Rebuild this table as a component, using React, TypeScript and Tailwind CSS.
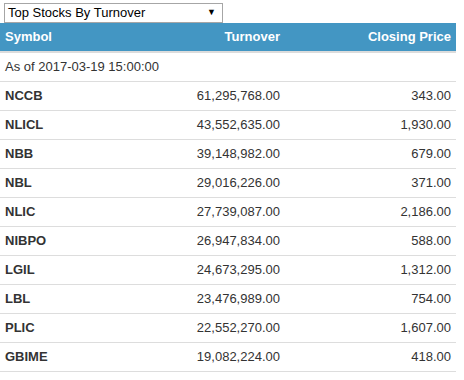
const rows: { symbol: string; turnover: string; close: string }[] = [
  { symbol: 'NCCB', turnover: '61,295,768.00', close: '343.00' },
  { symbol: 'NLICL', turnover: '43,552,635.00', close: '1,930.00' },
  { symbol: 'NBB', turnover: '39,148,982.00', close: '679.00' },
  { symbol: 'NBL', turnover: '29,016,226.00', close: '371.00' },
  { symbol: 'NLIC', turnover: '27,739,087.00', close: '2,186.00' },
  { symbol: 'NIBPO', turnover: '26,947,834.00', close: '588.00' },
  { symbol: 'LGIL', turnover: '24,673,295.00', close: '1,312.00' },
  { symbol: 'LBL', turnover: '23,476,989.00', close: '754.00' },
  { symbol: 'PLIC', turnover: '22,552,270.00', close: '1,607.00' },
  { symbol: 'GBIME', turnover: '19,082,224.00', close: '418.00' }
];

export default function App() {
  return (
    <div className="min-h-screen bg-white pt-[3px] font-['Liberation_Sans',Arial,sans-serif] text-[13px] text-[#333]">
      <div className="ml-[4px] flex h-[20px] w-[219px] items-center justify-between border border-[#a6a6a6] bg-white pl-[3px] pr-[6px] text-[13px] text-black">
        <span>Top Stocks By Turnover</span>
        <span className="text-[9px]">▼</span>
      </div>
      <div className="w-[456px]">
        <div className="flex h-[30px] items-center border-b-2 border-[#dcdcdc] bg-[#4396c3] font-bold text-white">
          <div className="w-[150px] pl-[5px]">Symbol</div>
          <div className="w-[130px] text-right">Turnover</div>
          <div className="flex-1 pr-[5px] text-right">Closing Price</div>
        </div>
        <div className="flex h-[29px] items-center border-b border-[#ddd] pl-[5px]">As of 2017-03-19 15:00:00</div>
        {rows.map((row) => (
          <div key={row.symbol} className="flex h-[29px] items-center border-b border-[#ddd]">
            <div className="w-[150px] pl-[5px] font-bold">{row.symbol}</div>
            <div className="w-[130px] text-right">{row.turnover}</div>
            <div className="flex-1 pr-[5px] text-right">{row.close}</div>
          </div>
        ))}
      </div>
    </div>
  );
}
